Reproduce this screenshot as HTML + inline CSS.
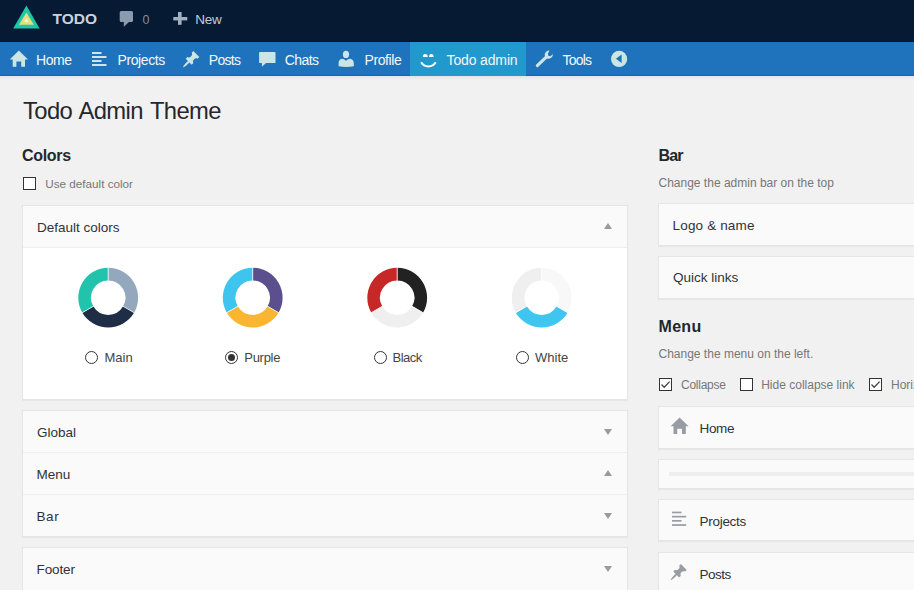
<!DOCTYPE html>
<html><head><meta charset="utf-8">
<style>
*{margin:0;padding:0;box-sizing:border-box}
html,body{width:914px;height:590px;overflow:hidden;background:#f1f1f1;font-family:"Liberation Sans",sans-serif}
.a{position:absolute}
.t{position:absolute;line-height:1;white-space:nowrap}
#top{left:0;top:0;width:914px;height:42px;background:#071a33;border-bottom:1px solid #05132a}
#nav{left:0;top:42px;width:914px;height:34px;background:#1e73bc;border-bottom:1px solid #1068b8}
#act{left:410px;top:42px;width:116px;height:34px;background:#2299cc}
#shadow{left:0;top:76px;width:914px;height:4px;background:linear-gradient(#e4e4e4,#f1f1f1)}
.nt{color:#f2f7fb;font-size:14px;letter-spacing:-0.4px;top:53.15px}
.ic{position:absolute;fill:#cbe6e4}
.pb{position:absolute;border:1px solid #e5e5e5;box-shadow:0 1px 1px rgba(0,0,0,.04);background:#fafafa}
.ptl{color:#2e3338;font-size:13.5px}
.h2{color:#23282d;font-size:16px;font-weight:bold;letter-spacing:-0.3px}
.desc{color:#777;font-size:12px}
.tri{position:absolute;width:0;height:0;border-left:4px solid transparent;border-right:4px solid transparent}
.up{border-bottom:6px solid #9a9a9a}
.dn{border-top:6px solid #9a9a9a}
.cb{position:absolute;width:13px;height:13px;border:1px solid #333;background:#fff}
.rd{position:absolute;width:13px;height:13px;border:1px solid #333;border-radius:50%;background:#fff}
.lbl{color:#444;font-size:13px}
</style></head><body>
<div id="top" class="a"></div>
<div id="nav" class="a"></div>
<div id="act" class="a"></div>
<div id="shadow" class="a"></div>

<!-- logo -->
<svg class="a" style="left:0;top:0" width="60" height="40" viewBox="0 0 60 40">
<polygon points="26.4,5.5 13.2,28.5 39.6,28.5" fill="#1fc6a7"/>
<polygon points="26.4,12.5 19,24.8 33.8,24.8" fill="#e5df7c"/>
<polygon points="26.4,18 24,21.9 28.8,21.9" fill="#eef0f6"/>
</svg>
<div id="todo" class="t" style="left:52.5px;top:11.2px;font-size:15.5px;font-weight:bold;color:#c9d2da">TODO</div>
<svg class="a" style="left:118px;top:10px" width="18" height="18" viewBox="0 0 18 18">
<path d="M3.2,1 H13.5 a1.5,1.5 0 0 1 1.5,1.5 V10.5 a1.5,1.5 0 0 1 -1.5,1.5 H11 L5.8,16.8 V12 H3.2 a1.5,1.5 0 0 1 -1.5,-1.5 V2.5 a1.5,1.5 0 0 1 1.5,-1.5Z" fill="#8a9bb0"/>
</svg>
<div id="zero" class="t" style="left:142.5px;top:13.6px;font-size:12.5px;color:#7d8ea6">0</div>
<svg class="a" style="left:172px;top:11px" width="16" height="16" viewBox="0 0 16 16">
<rect x="6" y="1" width="3.6" height="12.8" fill="#a3b0bf"/><rect x="1.3" y="6" width="14" height="3.4" fill="#a3b0bf"/>
</svg>
<div id="new" class="t" style="left:195.3px;top:12.6px;font-size:13.5px;letter-spacing:-0.25px;color:#c2ccd6">New</div>

<!-- nav -->
<svg class="ic" style="left:0;top:42px" width="40" height="34" viewBox="0 42 40 34">
<path d="M18.8,50.6 L28,59.4 H25 V66.8 H21.2 V61.6 H16.4 V66.8 H12.7 V59.4 H9.7Z"/>
</svg>
<div id="n1" class="t nt" style="left:36px">Home</div>
<svg class="ic" style="left:80px;top:42px" width="40" height="34" viewBox="80 42 40 34">
<rect x="92" y="52" width="9.5" height="2"/><rect x="92" y="56" width="14.5" height="2"/><rect x="92" y="60" width="9.5" height="2"/><rect x="92" y="64" width="14.5" height="2"/>
</svg>
<div id="n2" class="t nt" style="left:117.5px">Projects</div>
<svg class="ic" style="left:170px;top:42px" width="40" height="34" viewBox="170 42 40 34"><path transform="translate(181.9,50) scale(0.935)" d="M10.44 3.02l1.82-1.82 6.36 6.35-1.83 1.82c-1.05-.68-2.48-.57-3.41.36l-.75.75c-.92.93-1.04 2.35-.35 3.41l-1.83 1.82-2.41-2.41-2.8 2.790c-.42.42-3.38 2.71-3.8 2.29s1.86-3.39 2.28-3.81l2.79-2.79L4.1 9.36l1.83-1.82c1.05.69 2.48.57 3.4-.36l.75-.75c.93-.92 1.05-2.35.36-3.41z"/>
</svg>
<div id="n3" class="t nt" style="left:208.8px;letter-spacing:-0.7px">Posts</div>
<svg class="ic" style="left:250px;top:42px" width="40" height="34" viewBox="250 42 40 34">
<path d="M260,52 H274.6 a0.9,0.9 0 0 1 0.9,0.9 V62.2 a0.9,0.9 0 0 1 -0.9,0.9 H266 L261.9,66.8 V63.1 H260 a0.9,0.9 0 0 1 -0.9,-0.9 V52.9 a0.9,0.9 0 0 1 0.9,-0.9Z"/>
</svg>
<div id="n4" class="t nt" style="left:284.8px;letter-spacing:-0.6px">Chats</div>
<svg class="ic" style="left:330px;top:42px" width="40" height="34" viewBox="330 42 40 34">
<ellipse cx="346" cy="54.4" rx="3.1" ry="3.6"/>
<path d="M342,58.8 Q344,58.8 346,60.8 Q348,58.8 350,58.8 Q353.8,59.2 353.8,63.5 V66.2 Q346,67.8 338.6,66.2 V63.5 Q338.6,59.2 342,58.8Z"/>
</svg>
<div id="n5" class="t nt" style="left:364.5px">Profile</div>
<svg class="a" style="left:410px;top:42px" width="40" height="34" viewBox="410 42 40 34">
<path d="M422.8,57 a2.45,3 0 0 1 4.9,0Z M429,57 a2.3,3 0 0 1 4.6,0Z" fill="#fff"/>
<path d="M421.1,62.3 A8.5,8.5 0 0 0 435.7,62.3" fill="none" stroke="#fff" stroke-width="1.9"/>
</svg>
<div id="n6" class="t nt" style="left:446.6px;letter-spacing:-0.15px">Todo admin</div>
<svg class="ic" style="left:530px;top:42px" width="30" height="34" viewBox="530 42 30 34">
<path d="M549.5,50.6 a4.3,4.3 0 0 0 -4.6,5.6 L536.2,64.6 a1.4,1.4 0 0 0 0,2 l0.2,0.2 a1.4,1.4 0 0 0 2,0 L547,58.5 a4.3,4.3 0 0 0 5.8,-4.6 L550.6,56.2 L548.3,55.8 L547.9,53.4Z"/>
</svg>
<div id="n7" class="t nt" style="left:562.5px;letter-spacing:-0.8px">Tools</div>
<svg class="a" style="left:605px;top:42px" width="30" height="34" viewBox="605 42 30 34">
<circle cx="619.1" cy="58.9" r="8.1" fill="#cbe6e4"/>
<path d="M615.9,58.8 L621.6,54.6 V63Z" fill="#1e73bc"/>
</svg>

<!-- title -->
<div id="title" class="t" style="left:23px;top:98.85px;font-size:23.8px;letter-spacing:-0.62px;word-spacing:1.6px;color:#23282d">Todo Admin Theme</div>

<!-- Colors -->
<div id="colors" class="t h2" style="left:22px;top:147.5px">Colors</div>
<div class="cb" style="left:23px;top:177px"></div>
<div id="usedef" class="t desc" style="left:45.3px;top:177.5px;font-size:11.7px">Use default color</div>

<div class="pb" style="left:22px;top:205px;width:606px;height:195px;background:#fff"></div>
<div class="a" style="left:23px;top:206px;width:604px;height:42px;background:#fafafa;border-bottom:1px solid #eee"></div>
<div id="defc" class="t ptl" style="left:37px;top:221px">Default colors</div>
<div class="tri up" style="left:604px;top:223px"></div>

<svg class="a" style="left:0;top:240px" width="914" height="120" viewBox="0 240 914 120">
<g id="donuts"><path d="M108.20,267.80 A29.9,29.9 0 0 1 134.09,312.65 L123.10,306.30 A17.2,17.2 0 0 0 108.20,280.50Z" fill="#93a7bd"/><path d="M134.09,312.65 A29.9,29.9 0 0 1 82.31,312.65 L93.30,306.30 A17.2,17.2 0 0 0 123.10,306.30Z" fill="#1f2d47"/><path d="M82.31,312.65 A29.9,29.9 0 0 1 108.20,267.80 L108.20,280.50 A17.2,17.2 0 0 0 93.30,306.30Z" fill="#22c3ad"/><line x1="108.20" y1="266.80" x2="108.20" y2="281.50" stroke="#fff" stroke-width="0.8"/><line x1="134.96" y1="313.15" x2="122.23" y2="305.80" stroke="#fff" stroke-width="0.8"/><line x1="81.44" y1="313.15" x2="94.17" y2="305.80" stroke="#fff" stroke-width="0.8"/><path d="M252.70,267.80 A29.9,29.9 0 0 1 278.59,312.65 L267.60,306.30 A17.2,17.2 0 0 0 252.70,280.50Z" fill="#5b4f8e"/><path d="M278.59,312.65 A29.9,29.9 0 0 1 226.81,312.65 L237.80,306.30 A17.2,17.2 0 0 0 267.60,306.30Z" fill="#fbb631"/><path d="M226.81,312.65 A29.9,29.9 0 0 1 252.70,267.80 L252.70,280.50 A17.2,17.2 0 0 0 237.80,306.30Z" fill="#3ec4ef"/><line x1="252.70" y1="266.80" x2="252.70" y2="281.50" stroke="#fff" stroke-width="0.8"/><line x1="279.46" y1="313.15" x2="266.73" y2="305.80" stroke="#fff" stroke-width="0.8"/><line x1="225.94" y1="313.15" x2="238.67" y2="305.80" stroke="#fff" stroke-width="0.8"/><path d="M397.20,267.80 A29.9,29.9 0 0 1 423.09,312.65 L412.10,306.30 A17.2,17.2 0 0 0 397.20,280.50Z" fill="#222222"/><path d="M423.09,312.65 A29.9,29.9 0 0 1 371.31,312.65 L382.30,306.30 A17.2,17.2 0 0 0 412.10,306.30Z" fill="#efefef"/><path d="M371.31,312.65 A29.9,29.9 0 0 1 397.20,267.80 L397.20,280.50 A17.2,17.2 0 0 0 382.30,306.30Z" fill="#c62828"/><line x1="397.20" y1="266.80" x2="397.20" y2="281.50" stroke="#fff" stroke-width="0.8"/><line x1="423.96" y1="313.15" x2="411.23" y2="305.80" stroke="#fff" stroke-width="0.8"/><line x1="370.44" y1="313.15" x2="383.17" y2="305.80" stroke="#fff" stroke-width="0.8"/><path d="M541.70,267.80 A29.9,29.9 0 0 1 567.59,312.65 L556.60,306.30 A17.2,17.2 0 0 0 541.70,280.50Z" fill="#f8f8f8"/><path d="M567.59,312.65 A29.9,29.9 0 0 1 515.81,312.65 L526.80,306.30 A17.2,17.2 0 0 0 556.60,306.30Z" fill="#3ec5f0"/><path d="M515.81,312.65 A29.9,29.9 0 0 1 541.70,267.80 L541.70,280.50 A17.2,17.2 0 0 0 526.80,306.30Z" fill="#efefef"/><line x1="541.70" y1="266.80" x2="541.70" y2="281.50" stroke="#fff" stroke-width="0.8"/><line x1="568.46" y1="313.15" x2="555.73" y2="305.80" stroke="#fff" stroke-width="0.8"/><line x1="514.94" y1="313.15" x2="527.67" y2="305.80" stroke="#fff" stroke-width="0.8"/></g>
</svg>

<div class="rd" style="left:85px;top:351px"></div>
<div id="l1" class="t lbl" style="left:104.5px;top:351px">Main</div>
<div class="rd" style="left:225px;top:351px"></div>
<div class="a" style="left:228px;top:354px;width:7px;height:7px;border-radius:50%;background:#333"></div>
<div id="l2" class="t lbl" style="left:244.3px;top:351px;letter-spacing:-0.3px">Purple</div>
<div class="rd" style="left:374px;top:351px"></div>
<div id="l3" class="t lbl" style="left:392.5px;top:351px;letter-spacing:-0.5px">Black</div>
<div class="rd" style="left:516px;top:351px"></div>
<div id="l4" class="t lbl" style="left:535px;top:351px">White</div>

<!-- group panel -->
<div class="pb" style="left:22px;top:410px;width:606px;height:127px"></div>
<div class="a" style="left:23px;top:452px;width:604px;height:1px;background:#eee"></div>
<div class="a" style="left:23px;top:494px;width:604px;height:1px;background:#eee"></div>
<div id="glob" class="t ptl" style="left:37px;top:426px">Global</div>
<div id="menu" class="t ptl" style="left:36.5px;top:468.3px">Menu</div>
<div id="bar" class="t ptl" style="left:36.5px;top:510.3px;letter-spacing:0.6px">Bar</div>
<div class="tri dn" style="left:604px;top:429px"></div>
<div class="tri up" style="left:604px;top:470px"></div>
<div class="tri dn" style="left:604px;top:513px"></div>

<div class="pb" style="left:22px;top:547px;width:606px;height:60px"></div>
<div id="foot" class="t ptl" style="left:36.5px;top:563.3px;letter-spacing:-0.1px">Footer</div>
<div class="tri dn" style="left:604px;top:566px"></div>

<!-- right column -->
<div id="rbar" class="t h2" style="left:658.5px;top:147.5px;letter-spacing:-0.8px">Bar</div>
<div id="rbard" class="t desc" style="left:658.5px;top:177px">Change the admin bar on the top</div>
<div class="pb" style="left:658px;top:203px;width:300px;height:43px"></div>
<div id="logo" class="t ptl" style="left:672.6px;top:218.5px;letter-spacing:0.15px">Logo &amp; name</div>
<div class="pb" style="left:658px;top:256px;width:300px;height:43px"></div>
<div id="quick" class="t ptl" style="left:673px;top:271.3px">Quick links</div>

<div id="rmenu" class="t h2" style="left:658.5px;top:318.5px;letter-spacing:0.3px">Menu</div>
<div id="rmenud" class="t desc" style="left:658.5px;top:348px">Change the menu on the left.</div>
<div class="cb" style="left:659px;top:378px"></div>
<svg class="a" style="left:659px;top:378px" width="13" height="13" viewBox="0 0 13 13"><path d="M2.5,6.5 L5.2,9.2 L10.6,3.6" fill="none" stroke="#444" stroke-width="1.3"/></svg>
<div id="c1" class="t desc" style="left:681px;top:378.5px;letter-spacing:-0.25px">Collapse</div>
<div class="cb" style="left:740px;top:378px"></div>
<div id="c2" class="t desc" style="left:761.2px;top:378.5px">Hide collapse link</div>
<div class="cb" style="left:869px;top:378px"></div>
<svg class="a" style="left:869px;top:378px" width="13" height="13" viewBox="0 0 13 13"><path d="M2.5,6.5 L5.2,9.2 L10.6,3.6" fill="none" stroke="#444" stroke-width="1.3"/></svg>
<div id="c3" class="t desc" style="left:891px;top:378.5px">Horizontal</div>

<div class="pb" style="left:658px;top:406px;width:300px;height:43px"></div>
<svg class="a" style="left:660px;top:406px" width="40" height="43" viewBox="660 406 40 43">
<path d="M679.6,417.6 L688.6,426.2 H685.8 V434 H682 V428.8 H677.2 V434 H673.5 V426.2 H670.6Z" fill="#989da3"/>
</svg>
<div id="rhome" class="t ptl" style="left:699.6px;top:422px;letter-spacing:-0.4px">Home</div>
<div class="pb" style="left:658px;top:459px;width:300px;height:30px"></div>
<div class="a" style="left:669px;top:472px;width:260px;height:4px;background:#eee"></div>
<div class="pb" style="left:658px;top:499px;width:300px;height:42px"></div>
<svg class="a" style="left:660px;top:499px" width="40" height="42" viewBox="660 499 40 42">
<rect x="672" y="511.6" width="9.5" height="1.7" fill="#989da3"/><rect x="672" y="515.8" width="14.2" height="1.7" fill="#989da3"/><rect x="672" y="520" width="9.5" height="1.7" fill="#989da3"/><rect x="672" y="524.2" width="14.2" height="1.7" fill="#989da3"/>
</svg>
<div id="rproj" class="t ptl" style="left:699.6px;top:515px;letter-spacing:-0.3px">Projects</div>
<div class="pb" style="left:658px;top:552px;width:300px;height:60px"></div>
<svg class="a" style="left:660px;top:552px" width="40" height="38" viewBox="660 552 40 38"><path fill="#989da3" transform="translate(669.5,562.9) scale(0.925)" d="M10.44 3.02l1.82-1.82 6.36 6.35-1.83 1.82c-1.05-.68-2.48-.57-3.41.36l-.75.75c-.92.93-1.04 2.35-.35 3.41l-1.83 1.82-2.41-2.41-2.8 2.790c-.42.42-3.38 2.71-3.8 2.29s1.86-3.39 2.28-3.81l2.79-2.79L4.1 9.36l1.83-1.82c1.05.69 2.48.57 3.4-.36l.75-.75c.93-.92 1.05-2.35.36-3.41z"/>
</svg>
<div id="rposts" class="t ptl" style="left:699.6px;top:568px;letter-spacing:-0.5px">Posts</div>
</body></html>
